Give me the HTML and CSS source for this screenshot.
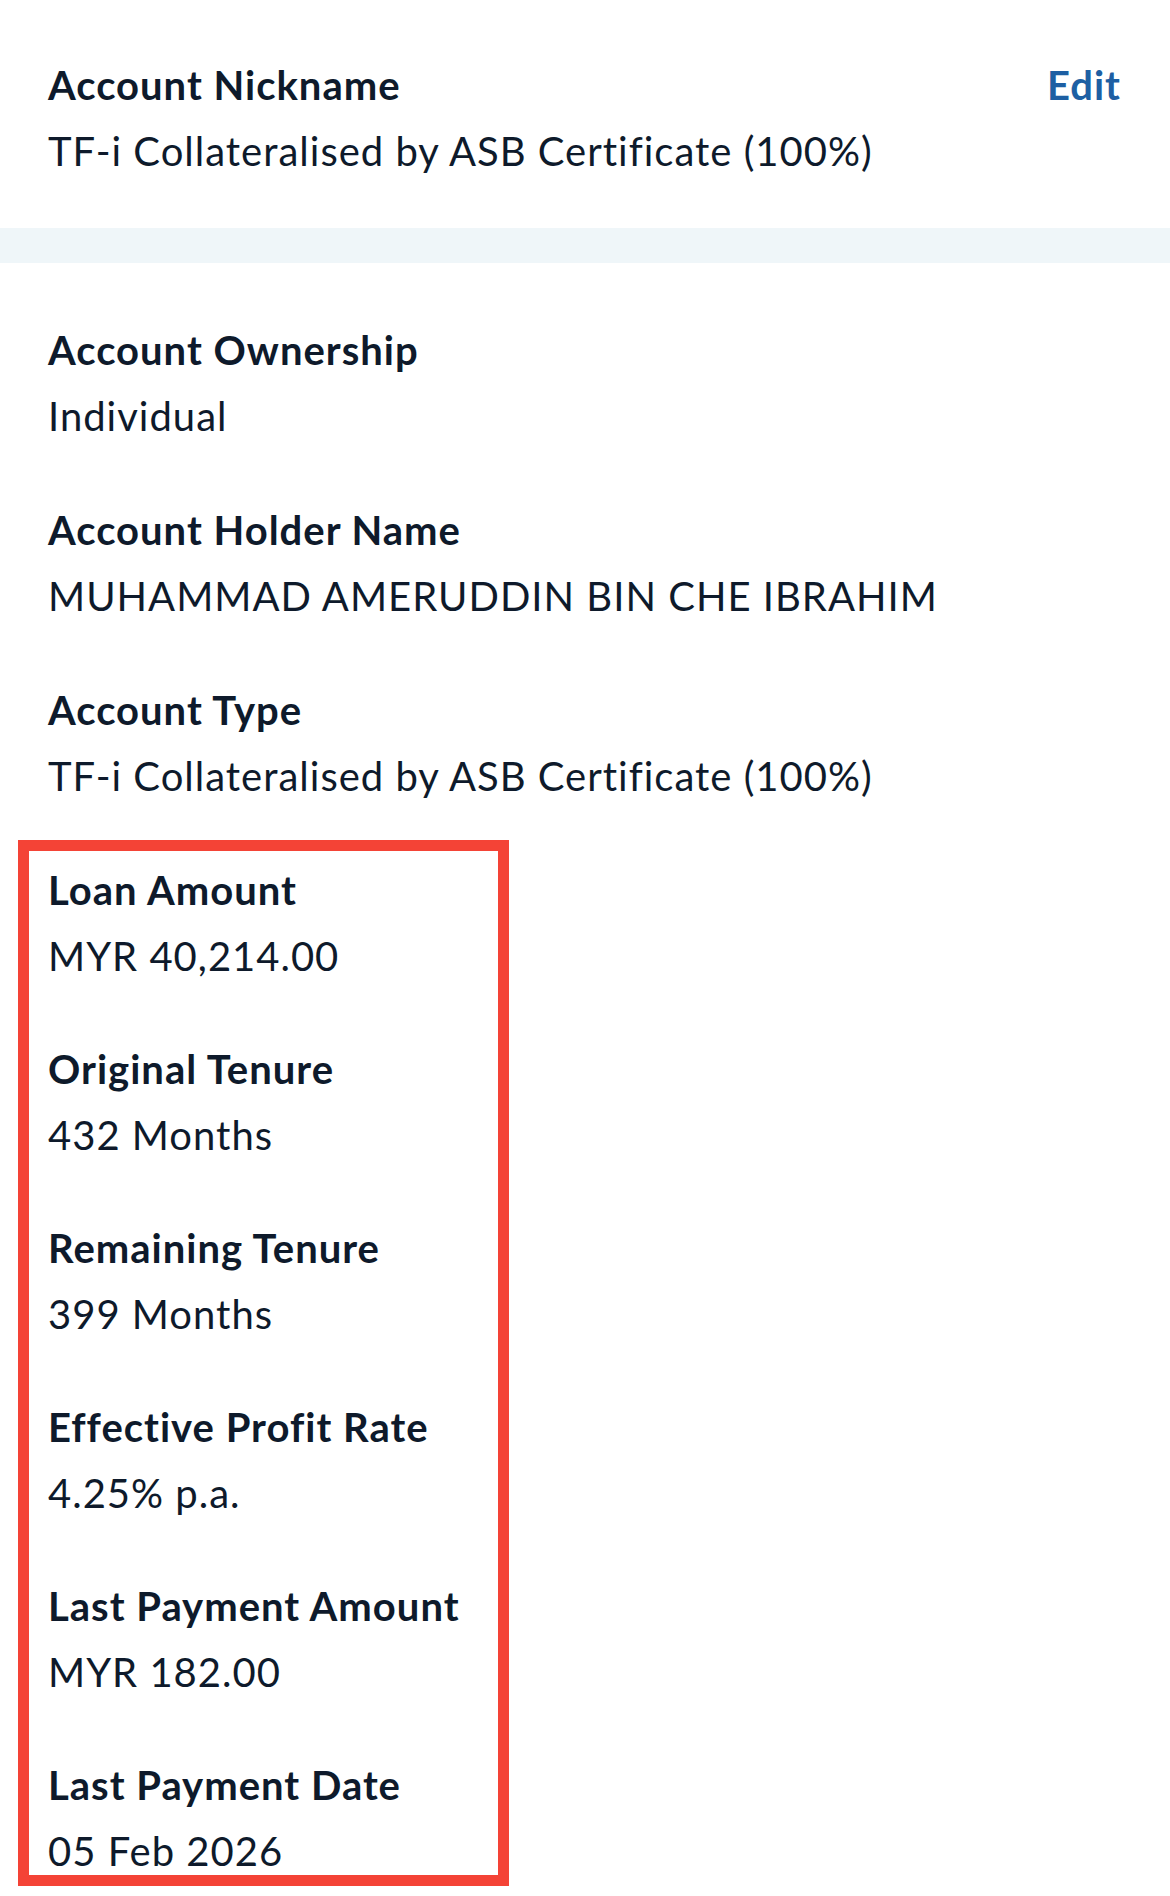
FILE: index.html
```html
<!DOCTYPE html>
<html lang="en">
<head>
  <meta charset="UTF-8" />
  <meta name="viewport" content="width=device-width, initial-scale=1.0"/>
  <title>Account Details</title>
  <link rel="stylesheet" href="styles.css">
</head>
<body>
  <section class="nickname">
    <div class="field-head">
      <div class="label">Account Nickname</div>
      <a class="edit" href="#">Edit</a>
    </div>
    <div class="value">TF-i Collateralised by ASB Certificate (100%)</div>
  </section>

  <div class="divider"></div>

  <section class="details">
    <div class="field">
      <div class="label">Account Ownership</div>
      <div class="value">Individual</div>
    </div>
    <div class="field">
      <div class="label">Account Holder Name</div>
      <div class="value">MUHAMMAD AMERUDDIN BIN CHE IBRAHIM</div>
    </div>
    <div class="field">
      <div class="label">Account Type</div>
      <div class="value">TF-i Collateralised by ASB Certificate (100%)</div>
    </div>

    <div class="highlight">
      <div class="field">
        <div class="label">Loan Amount</div>
        <div class="value">MYR 40,214.00</div>
      </div>
      <div class="field">
        <div class="label">Original Tenure</div>
        <div class="value">432 Months</div>
      </div>
      <div class="field">
        <div class="label">Remaining Tenure</div>
        <div class="value">399 Months</div>
      </div>
      <div class="field">
        <div class="label">Effective Profit Rate</div>
        <div class="value">4.25% p.a.</div>
      </div>
      <div class="field">
        <div class="label">Last Payment Amount</div>
        <div class="value">MYR 182.00</div>
      </div>
      <div class="field">
        <div class="label">Last Payment Date</div>
        <div class="value">05 Feb 2026</div>
      </div>
    </div>
  </section>
</body>
</html>
```

FILE: styles.css
```css
body {
  margin: 0;
  background: #fff;
  font-family: Lato, "Open Sans", sans-serif;
  font-size: 40px;
  line-height: 66px;
  letter-spacing: 1px;
  color: #0e1a2b;
  overflow: hidden;
}
.label {
  font-weight: bold;
}
.value {
  font-weight: normal;
}
.nickname {
  padding: 52px 49px 44px 48px;
}
.field-head {
  display: flex;
  justify-content: space-between;
}
.edit {
  color: #1d5fa3;
  font-weight: bold;
  text-decoration: none;
}
.divider {
  height: 35px;
  background: #eff6f9;
}
.details {
  padding: 54px 48px 0 48px;
}
.field + .field {
  margin-top: 48px;
}
.highlight {
  margin: 31px 0 0 -30px;
  width: 450px;
  border: 11px solid #f44336;
  padding: 6px 0 0 19px;
}
.highlight .field + .field {
  margin-top: 47px;
}
.highlight .field:last-child {
  margin-bottom: -9px;
}
```
